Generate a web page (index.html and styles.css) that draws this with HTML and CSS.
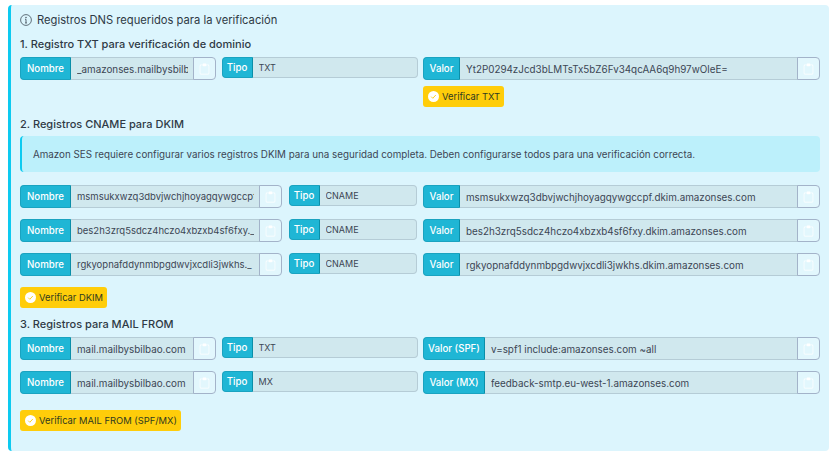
FILE: index.html
```html
<!DOCTYPE html>
<html lang="es">
<head>
    <meta charset="UTF-8">
    <meta name="viewport" content="width=device-width, initial-scale=1.0">
    <title>Registros DNS</title>
    <link rel="stylesheet" href="styles.css">
</head>
<body>
    <svg class="defs" width="0" height="0">
        <symbol id="clip" viewBox="0 0 16 16">
            <path d="M4 1.5H3a2 2 0 0 0-2 2V14a2 2 0 0 0 2 2h10a2 2 0 0 0 2-2V3.5a2 2 0 0 0-2-2h-1v1h1a1 1 0 0 1 1 1V14a1 1 0 0 1-1 1H3a1 1 0 0 1-1-1V3.5a1 1 0 0 1 1-1h1v-1z"/>
            <path d="M6.5 0A1.5 1.5 0 0 0 5 1.5v1A1.5 1.5 0 0 0 6.5 4h3A1.5 1.5 0 0 0 11 2.5v-1A1.5 1.5 0 0 0 9.5 0h-3z"/>
        </symbol>
        <symbol id="ok" viewBox="0 0 16 16">
            <circle cx="8" cy="8" r="8" fill="#fff"/>
            <path d="M4.6 8.2l2.4 2.4 4.4-4.8" fill="none" stroke="#ffcd0a" stroke-width="1.3"/>
        </symbol>
    </svg>

    <div class="panel">
        <div class="panel-title">
            <svg class="info-icon" viewBox="0 0 16 16">
                <circle cx="8" cy="8" r="7.2" fill="none" stroke="#3a4550" stroke-width="1"/>
                <path d="M8 7v5M6.8 12h2.4M6.8 7H8" fill="none" stroke="#3a4550" stroke-width="1.1"/>
                <circle cx="8" cy="4.6" r="0.9" fill="#3a4550"/>
            </svg>
            Registros DNS requeridos para la verificación
        </div>

        <h6 class="step step-first">1. Registro TXT para verificación de dominio</h6>
        <div class="dns-row">
            <div class="group"><span class="tag tag-name">Nombre</span><div class="field"><span>_amazonses.mailbysbilbao.com</span></div><button class="copy"><svg><use href="#clip"/></svg></button></div>
            <div class="group group-short"><span class="tag tag-type">Tipo</span><div class="field"><span>TXT</span></div></div>
            <div class="group"><span class="tag tag-value">Valor</span><div class="field"><span>Yt2P0294zJcd3bLMTsTx5bZ6Fv34qcAA6q9h97wOleE=</span></div><button class="copy"><svg><use href="#clip"/></svg></button></div>
        </div>
        <div class="check-under"><button class="verify"><svg><use href="#ok"/></svg>Verificar TXT</button></div>

        <h6 class="step step-cname">2. Registros CNAME para DKIM</h6>
        <div class="note">Amazon SES requiere configurar varios registros DKIM para una seguridad completa. Deben configurarse todos para una verificación correcta.</div>

        <div class="dns-row dns-row-wide">
            <div class="group"><span class="tag tag-name">Nombre</span><div class="field"><span>msmsukxwzq3dbvjwchjhoyagqywgccpf</span></div><button class="copy"><svg><use href="#clip"/></svg></button></div>
            <div class="group group-short"><span class="tag tag-type">Tipo</span><div class="field"><span>CNAME</span></div></div>
            <div class="group"><span class="tag tag-value">Valor</span><div class="field"><span>msmsukxwzq3dbvjwchjhoyagqywgccpf.dkim.amazonses.com</span></div><button class="copy"><svg><use href="#clip"/></svg></button></div>
        </div>
        <div class="dns-row dns-row-wide">
            <div class="group"><span class="tag tag-name">Nombre</span><div class="field"><span>bes2h3zrq5sdcz4hczo4xbzxb4sf6fxy._d</span></div><button class="copy"><svg><use href="#clip"/></svg></button></div>
            <div class="group group-short"><span class="tag tag-type">Tipo</span><div class="field"><span>CNAME</span></div></div>
            <div class="group"><span class="tag tag-value">Valor</span><div class="field"><span>bes2h3zrq5sdcz4hczo4xbzxb4sf6fxy.dkim.amazonses.com</span></div><button class="copy"><svg><use href="#clip"/></svg></button></div>
        </div>
        <div class="dns-row dns-row-wide">
            <div class="group"><span class="tag tag-name">Nombre</span><div class="field"><span>rgkyopnafddynmbpgdwvjxcdli3jwkhs._</span></div><button class="copy"><svg><use href="#clip"/></svg></button></div>
            <div class="group group-short"><span class="tag tag-type">Tipo</span><div class="field"><span>CNAME</span></div></div>
            <div class="group"><span class="tag tag-value">Valor</span><div class="field"><span>rgkyopnafddynmbpgdwvjxcdli3jwkhs.dkim.amazonses.com</span></div><button class="copy"><svg><use href="#clip"/></svg></button></div>
        </div>
        <button class="verify"><svg><use href="#ok"/></svg>Verificar DKIM</button>

        <h6 class="step step-mail">3. Registros para MAIL FROM</h6>
        <div class="dns-row">
            <div class="group"><span class="tag tag-name">Nombre</span><div class="field"><span>mail.mailbysbilbao.com</span></div><button class="copy"><svg><use href="#clip"/></svg></button></div>
            <div class="group group-short"><span class="tag tag-type">Tipo</span><div class="field"><span>TXT</span></div></div>
            <div class="group"><span class="tag tag-long">Valor (SPF)</span><div class="field"><span>v=spf1 include:amazonses.com ~all</span></div><button class="copy"><svg><use href="#clip"/></svg></button></div>
        </div>
        <div class="dns-row">
            <div class="group"><span class="tag tag-name">Nombre</span><div class="field"><span>mail.mailbysbilbao.com</span></div><button class="copy"><svg><use href="#clip"/></svg></button></div>
            <div class="group group-short"><span class="tag tag-type">Tipo</span><div class="field"><span>MX</span></div></div>
            <div class="group"><span class="tag tag-long">Valor (MX)</span><div class="field"><span>feedback-smtp.eu-west-1.amazonses.com</span></div><button class="copy"><svg><use href="#clip"/></svg></button></div>
        </div>
        <button class="verify verify-last"><svg><use href="#ok"/></svg>Verificar MAIL FROM (SPF/MX)</button>
    </div>
</body>
</html>
```

FILE: styles.css
```css
body {
    font-family: Inter, "Noto Sans", sans-serif;
    margin: 5px 7px 6px 8px;
    color: #33404c;
    font-size: 9.5px;
    background-color: #fff;
}
.defs { position: absolute; }
.panel {
    background: #dcf5fd;
    border-left: 3px solid #0dcaf0;
    border-radius: 4px;
    padding: 7px 9px 20px 9px;
}
.panel-title {
    display: flex;
    align-items: center;
    gap: 5px;
    height: 16px;
    font-size: 11.2px;
    color: #2f3a45;
}
.info-icon { width: 12px; height: 12px; flex: none; }
.step {
    margin: 0;
    font-size: 11px;
    line-height: 14px;
    font-weight: 500;
    color: #2f3a45;
}
.step-first { margin-top: 9px; margin-bottom: 6px; }
.step-cname { margin-top: 10px; margin-bottom: 5px; }
.step-mail { margin-top: 9px; margin-bottom: 6px; }
.dns-row {
    display: grid;
    grid-template-columns: 196px 196px 1fr;
    column-gap: 5.5px;
    align-items: start;
    margin-bottom: 11px;
}
.dns-row-wide { grid-template-columns: 262px 128px 1fr; column-gap: 6.5px; }
.group { display: flex; height: 23px; min-width: 0; }
.group-short { height: 21px; }
.tag {
    flex: none;
    display: flex;
    align-items: center;
    justify-content: center;
    background: #1fb6d5;
    border: 1px solid #1aa3c0;
    border-right-color: #0b8ea8;
    border-radius: 4px 0 0 4px;
    color: #fff;
    font-size: 9.7px;
    font-weight: 500;
    box-sizing: border-box;
}
.tag-name { width: 51px; }
.tag-type { width: 31px; }
.tag-value { width: 37px; }
.tag-long { width: 62px; }
.field {
    flex: 1;
    min-width: 0;
    display: flex;
    align-items: center;
    padding: 0 5px 0 6px;
    background: #d0e8ee;
    border: 1px solid #b5ccd6;
    border-left: 0;
    box-sizing: border-box;
    color: #3c4654;
    font-size: 9.85px;
}
.field span {
    display: block;
    overflow: hidden;
    white-space: nowrap;
    width: 100%;
}
.dns-row-wide .group:first-child .field { font-size: 9.5px; }
.group-short .field { border-radius: 0 4px 4px 0; font-size: 9px; }
.copy {
    flex: none;
    width: 23px;
    padding: 0;
    display: flex;
    align-items: center;
    justify-content: center;
    background: #e2f7fd;
    border: 1px solid #a3b3c9;
    border-radius: 0 4px 4px 0;
    margin-left: -1px;
}
.copy svg { width: 11px; height: 12px; fill: #fff; }
.check-under {
    display: flex;
    padding-left: 403px;
    margin-top: -5px;
}
.verify {
    display: inline-flex;
    align-items: center;
    gap: 3px;
    height: 21px;
    padding: 0 4px 0 5px;
    background: #ffcd0a;
    border: 0;
    border-radius: 3px;
    font-family: inherit;
    font-size: 9.4px;
    color: #2f3a20;
}
.verify svg { width: 11px; height: 11px; flex: none; }
.note {
    height: 36px;
    display: flex;
    align-items: center;
    padding-left: 11px;
    background: #bcf0fb;
    border-left: 2px solid #0dcaf0;
    border-radius: 4px;
    font-size: 9.8px;
    color: #3c4654;
    margin-bottom: 13px;
}
.verify-last { display: flex; margin-top: 16px; }
```
